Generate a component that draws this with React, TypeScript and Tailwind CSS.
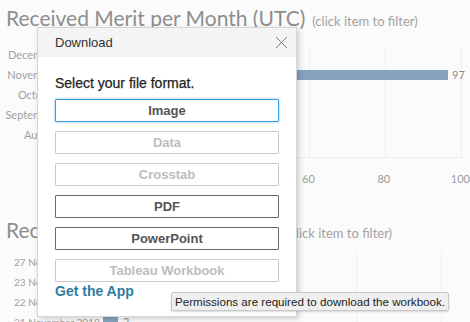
import { clsx } from "clsx";

const monthRows = ["December", "November", "October", "September", "August", "July"];
const dayRows = ["27 November 2019", "23 November 2019", "22 November 2019", "21 November 2019"];

const formats = [
  { label: "Image", state: "active" },
  { label: "Data", state: "disabled" },
  { label: "Crosstab", state: "disabled" },
  { label: "PDF", state: "enabled" },
  { label: "PowerPoint", state: "enabled" },
  { label: "Tableau Workbook", state: "disabled" },
];

const MonthChart = () => (
  <div className="h-[200px]">
    <div className="flex items-baseline gap-[7px] pl-[6px] pt-[5px] leading-[26px]">
      <span className="text-[21px] text-[#8e8e8e]">Received Merit per Month (UTC)</span>
      <span className="text-[13px] text-[#a2a2a2]">(click item to filter)</span>
    </div>
    <div className="mt-[11px] flex">
      {/* row labels */}
      <div className="w-[58px] text-right text-[11px] text-[#a0a0a0]">
        {monthRows.map((m) => (
          <div key={m} className="h-[20px] leading-[20px]">
            {m}
          </div>
        ))}
      </div>
      {/* plot */}
      <div className="relative ml-[23px] h-[113px] w-[384px] border-b border-[#ededed]">
        <div className="absolute left-[228px] top-0 h-full w-px bg-[#efefef]" />
        <div className="absolute left-[304px] top-0 h-full w-px bg-[#efefef]" />
        <div className="absolute left-[380px] top-0 h-full w-px bg-[#efefef]" />
        <div className="relative mt-[25px] flex items-center gap-[4px]">
          <div className="h-[10px] w-[367px] shrink-0 bg-[#86a2bf]" />
          <span className="shrink-0 text-[11px] leading-[10px] text-[#8c8c8c]">97</span>
        </div>
      </div>
    </div>
    <div className="flex pl-[302px] pt-[7px] text-[11px] leading-[13px] text-[#9c9c9c]">
      <span className="w-[76px]">60</span>
      <span className="w-[74px]">80</span>
      <span>100</span>
    </div>
  </div>
);

const DayChart = () => (
  <div>
    <div className="flex items-baseline gap-[7px] pl-[6px] pt-[17px] leading-[26px]">
      <span className="text-[21px] text-[#8e8e8e]">Received Merit per Day (UTC)</span>
      <span className="text-[13px] text-[#a2a2a2]">(click item to filter)</span>
    </div>
    <div className="relative mt-[6px] flex">
      <div className="w-[89px] shrink-0 whitespace-nowrap pl-[14px] text-[10px] text-[#a0a0a0]">
        {dayRows.map((d) => (
          <div key={d} className="h-[20px] leading-[20px]">
            {d}
          </div>
        ))}
      </div>
      <div className="absolute left-[356px] top-0 h-[90px] w-px bg-[#efefef]" />
      <div className="absolute left-[441px] top-0 h-[90px] w-px bg-[#efefef]" />
      <div className="ml-[14px] mt-[65px] flex h-[10px] items-center gap-[5px]">
        <div className="h-[10px] w-[15px] bg-[#86a2bf]" />
        <span className="text-[11px] text-[#8c8c8c]">2</span>
      </div>
    </div>
  </div>
);

const DownloadDialog = () => (
  <div
    className="absolute left-[37px] top-[27px] h-[290px] w-[260px] border border-[#d6d6d6] bg-white shadow-[2px_2px_6px_rgba(0,0,0,0.18)]"
    style={{ fontFamily: '"Liberation Sans", Arial, sans-serif' }}
  >
    <div className="flex h-[29px] items-center justify-between bg-[#f4f4f4] pl-[17px] pr-[8px]">
      <span className="text-[13px] text-[#333]">Download</span>
      <svg width="13" height="13" viewBox="0 0 13 13" fill="none" stroke="#7a7a7a" strokeWidth="1">
        <path d="M1 1L12 12M12 1L1 12" />
      </svg>
    </div>
    <div className="px-[17px]">
      <div className="pt-[18px] text-[14px] leading-[17px] text-[#1e1e1e] [-webkit-text-stroke:0.25px_#1e1e1e]">
        Select your file format.
      </div>
      <div className="mt-[7px] flex flex-col gap-[9px]">
        {formats.map((f) => (
          <div
            key={f.label}
            className={clsx(
              "flex h-[23px] w-[224px] items-center justify-center rounded-[1px] border text-[13px] font-bold",
              f.state === "active" && "border-[#3a9ce0] text-[#555] shadow-[0_0_3px_rgba(58,156,224,0.6)]",
              f.state === "enabled" && "border-[#666] text-[#555]",
              f.state === "disabled" && "border-[#c9c9c9] text-[#bdbdbd]",
            )}
          >
            {f.label}
          </div>
        ))}
      </div>
      <div className="mt-[1px] text-[14px] font-bold leading-[17px] text-[#2e7ca0]">Get the App</div>
    </div>
  </div>
);

export default function App() {
  return (
    <div
      className="relative h-[322px] w-[470px] overflow-hidden bg-[#fbfbfb]"
      style={{ fontFamily: "Lato, 'Open Sans', sans-serif" }}
    >
      <MonthChart />
      <DayChart />
      <DownloadDialog />
      <div
        className="absolute left-[171px] top-[292px] h-[19px] whitespace-nowrap rounded-[2px] border border-[#c8c8c8] bg-[#efefef] px-[3px] text-[11.6px] leading-[17px] text-[#222] shadow-[0_1px_2px_rgba(0,0,0,0.15)]"
        style={{ fontFamily: '"Liberation Sans", Arial, sans-serif' }}
      >
        Permissions are required to download the workbook.
      </div>
    </div>
  );
}
